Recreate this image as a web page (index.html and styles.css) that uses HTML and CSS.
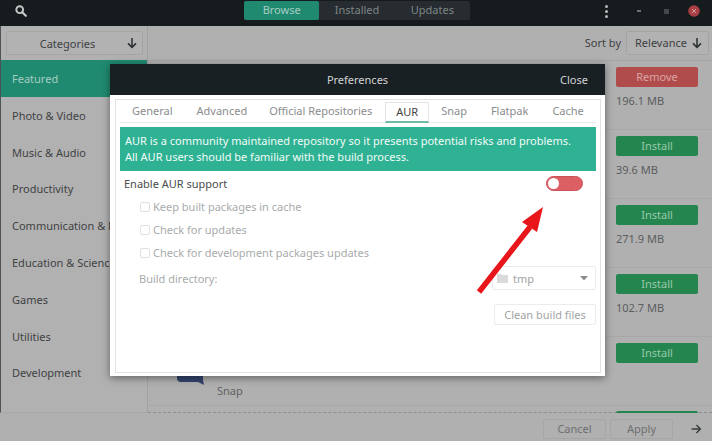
FILE: index.html
```html
<!DOCTYPE html>
<html lang="en">
<head>
<meta charset="utf-8">
<title>Preferences</title>
<link rel="stylesheet" href="styles.css">
</head>
<body>
<div class="app">
  <header class="topbar">
    <svg class="search-icon" width="12" height="12" viewBox="0 0 12 12"><circle cx="4.7" cy="4.7" r="3.4" fill="none" stroke="#c4c8c8" stroke-width="1.9"/><path d="M7.2 7.2L10.8 10.8" stroke="#c4c8c8" stroke-width="2.2" stroke-linecap="round"/></svg>
    <nav class="tabs-main">
      <span class="tab-main active">Browse</span>
      <span class="tab-main">Installed</span>
      <span class="tab-main">Updates</span>
    </nav>
    <div class="win-controls">
      <span class="kebab"><i></i><i></i><i></i></span>
      <span class="win-min"></span>
      <span class="win-max"></span>
      <svg class="win-close" width="12" height="12" viewBox="0 0 12 12"><circle cx="6" cy="6" r="5.8" fill="#a83f44"/><path d="M4 4L8 8M8 4L4 8" stroke="#d79a9c" stroke-width="1"/></svg>
    </div>
  </header>
  <div class="content">
    <aside class="sidebar">
      <div class="cat-wrap">
        <div class="select cat-select"><span class="cat-label">Categories</span>
          <svg class="arrow-down" width="12" height="12" viewBox="0 0 12 12"><path d="M6 1V10M2 6.4L6 10.4L10 6.4" fill="none" stroke="#2b2f31" stroke-width="1.5"/></svg>
        </div>
      </div>
      <ul class="cats">
        <li class="cat active">Featured</li>
        <li class="cat">Photo &amp; Video</li>
        <li class="cat">Music &amp; Audio</li>
        <li class="cat">Productivity</li>
        <li class="cat">Communication &amp; News</li>
        <li class="cat">Education &amp; Science</li>
        <li class="cat">Games</li>
        <li class="cat">Utilities</li>
        <li class="cat">Development</li>
      </ul>
    </aside>
    <main class="list">
      <div class="sortbar">
        <span class="sort-label">Sort by</span>
        <div class="select sort-select">Relevance
          <svg class="arrow-down" width="12" height="12" viewBox="0 0 12 12"><path d="M6 1V10M2 6.4L6 10.4L10 6.4" fill="none" stroke="#2b2f31" stroke-width="1.5"/></svg>
        </div>
      </div>
      <div class="rows">
        <div class="row"><div class="pkg-action"><span class="btn-remove">Remove</span><span class="size">196.1 MB</span></div></div>
        <div class="row"><div class="pkg-action"><span class="btn-install">Install</span><span class="size">39.6 MB</span></div></div>
        <div class="row"><div class="pkg-action"><span class="btn-install">Install</span><span class="size">271.9 MB</span></div></div>
        <div class="row"><div class="pkg-action"><span class="btn-install">Install</span><span class="size">102.7 MB</span></div></div>
        <div class="row row-snap">
          <div class="pkg-info">
            <svg class="snap-icon" width="28" height="22" viewBox="0 0 28 22"><path d="M1 0H27V17L28 22L22 19H5Q1 19 1 15Z" fill="#33456f"/></svg>
            <span class="pkg-source">Snap</span>
          </div>
          <div class="pkg-action"><span class="btn-install">Install</span></div>
        </div>
        <div class="row-peek"><span class="btn-peek"></span></div>
      </div>
    </main>
  </div>
  <footer class="footer">
    <span class="foot-btn">Cancel</span>
    <span class="foot-btn">Apply</span>
    <svg class="arrow-right" width="12" height="12" viewBox="0 0 12 12"><path d="M1.5 6H10M6.4 2L10.4 6L6.4 10" fill="none" stroke="#3a3e40" stroke-width="1.4"/></svg>
  </footer>
</div>

<section class="dialog">
  <div class="dialog-head">
    <span class="dialog-title">Preferences</span>
    <span class="dialog-close">Close</span>
  </div>
  <div class="dialog-body">
    <div class="pane">
      <div class="pref-tabs">
        <span class="pref-tab">General</span>
        <span class="pref-tab">Advanced</span>
        <span class="pref-tab official">Official Repositories</span>
        <span class="pref-tab current">AUR</span>
        <span class="pref-tab">Snap</span>
        <span class="pref-tab">Flatpak</span>
        <span class="pref-tab">Cache</span>
      </div>
      <div class="notice">AUR is a community maintained repository so it presents potential risks and problems.<br>All AUR users should be familiar with the build process.</div>
      <div class="enable-row">
        <span>Enable AUR support</span>
        <span class="switch"><span class="knob"></span></span>
      </div>
      <label class="check"><span class="box"></span>Keep built packages in cache</label>
      <label class="check"><span class="box"></span>Check for updates</label>
      <label class="check"><span class="box"></span>Check for development packages updates</label>
      <div class="dir-row">
        <span>Build directory:</span>
        <span class="dir-select">
          <svg class="folder" width="11" height="9" viewBox="0 0 11 9"><path d="M0 0H4L5 1H11V9H0Z" fill="#dadada"/></svg>
          <span class="dir-name">tmp</span>
          <svg class="caret" width="8" height="5" viewBox="0 0 8 5"><path d="M0 0H8L4 4.5Z" fill="#8b8b8b"/></svg>
        </span>
      </div>
      <div class="clean-row"><span class="clean-btn">Clean build files</span></div>
    </div>
  </div>
</section>

<svg class="annotation" width="80" height="96" viewBox="0 0 80 96">
  <path d="M3 88L54 23" stroke="#e8161b" stroke-width="5.5" fill="none"/>
  <path d="M67 3L61 28L46 18Z" fill="#e8161b"/>
</svg>
</body>
</html>
```
FILE: styles.css
```css
* { box-sizing: border-box; }
html, body { margin: 0; padding: 0; }
body {
  width: 712px;
  height: 441px;
  overflow: hidden;
  position: relative;
  font-family: "Noto Sans", sans-serif;
  font-size: 11px;
  color: #4a4c4d;
  background: #b0b0b0;
}
.app { display: flex; flex-direction: column; height: 441px; }

.topbar {
  height: 26px;
  flex: none;
  background: #161b1e;
  display: flex;
  align-items: flex-start;
  position: relative;
  padding: 5px 0 0 15px;
}
.tabs-main {
  position: absolute;
  left: 244px;
  top: 1px;
  height: 19px;
  width: 226px;
  display: flex;
  background: #262c30;
  border-radius: 2px;
}
.tab-main {
  width: 76px;
  text-align: center;
  line-height: 18px;
  color: #7e8486;
}
.tab-main.active { background: #208a70; color: #a6cdc3; border-radius: 2px; }
.win-controls {
  margin-left: auto;
  display: flex;
  align-items: center;
  height: 12px;
  margin-right: 12px;
}
.kebab { display: flex; flex-direction: column; gap: 2px; margin-right: 29px; }
.kebab i { width: 3px; height: 3px; border-radius: 50%; background: #b7baba; display: block; }
.win-min { width: 4px; height: 2px; background: #6c7072; margin-right: 23px; }
.win-max { width: 5px; height: 5px; background: #43484a; margin-right: 19px; }
.win-close { display: block; }

.content { flex: 1; display: flex; min-height: 0; }
.sidebar {
  width: 148px;
  flex: none;
  border-right: 1px solid #a2a2a2;
  border-left: 1px solid #4e5355;
  border-bottom: 1px solid #a8a8a8;
  background: #b1b1b1;
}
.cat-wrap { height: 34px; padding: 5px 4px 0 5px; }
.select {
  border: 1px solid #a4a4a4;
  border-radius: 2px;
  background: #b2b2b2;
  display: flex;
  align-items: center;
  color: #3e4142;
  height: 24px;
}
.cat-select { position: relative; justify-content: center; padding-right: 14px; }
.cat-select .arrow-down { position: absolute; right: 4px; top: 5px; }
.cats { list-style: none; margin: 0; padding: 0; }
.cat {
  height: 36.8px;
  line-height: 37px;
  padding-left: 11px;
  white-space: nowrap;
  overflow: hidden;
  color: #3f4243;
}
.cat.active { background: #208a70; color: #a6cdc3; }

.list { flex: 1; min-width: 0; display: flex; flex-direction: column; }
.sortbar {
  height: 35px;
  flex: none;
  display: flex;
  align-items: center;
  justify-content: flex-end;
  border-bottom: 1px solid #a4a4a4;
  padding: 0 3px 1px 0;
  gap: 5px;
}
.sort-label { color: #3f4243; }
.sort-select { width: 83px; padding-left: 8px; justify-content: space-between; padding-right: 5px; }

.rows { flex: 1; min-height: 0; border-bottom: 1px dashed #8e8e8e; }
.row {
  height: 69px;
  border-bottom: 1px solid #a8a8a8;
  display: flex;
  justify-content: flex-end;
  padding: 6px 14px 0 0;
}
.pkg-action { width: 82px; display: flex; flex-direction: column; }
.btn-remove, .btn-install {
  height: 20px;
  line-height: 20px;
  text-align: center;
  border-radius: 2px;
}
.btn-remove { background: #b14c4c; color: #d9a4a4; }
.btn-install { background: #24864e; color: #99c8ab; }
.size { margin-top: 4px; line-height: 20px; color: #5b5d5e; }
.row-snap { justify-content: space-between; }
.pkg-info { display: flex; flex-direction: column; margin-left: 28px; }
.snap-icon { margin-top: 20px; flex: none; }
.pkg-source { margin: -2px 0 0 41px; line-height: 15px; color: #606263; }
.row-peek { height: 6px; display: flex; justify-content: flex-end; padding: 5px 14px 0 0; }
.btn-peek { width: 82px; height: 2px; flex: none; background: #24864e; border-radius: 2px 2px 0 0; }

.footer {
  height: 28px;
  flex: none;
  display: flex;
  align-items: center;
  justify-content: flex-end;
  gap: 4px;
  padding: 3px 10px 0 0;
  color: #6d6f70;
}
.foot-btn {
  width: 63px;
  height: 20px;
  line-height: 18px;
  text-align: center;
  border: 1px solid #a6a6a6;
  border-radius: 2px;
}
.arrow-right { margin-left: 13px; }

.dialog {
  position: absolute;
  left: 110px;
  top: 64px;
  width: 495px;
  height: 312px;
  background: #fff;
  box-shadow: 0 2px 8px rgba(0, 0, 0, 0.45);
  display: flex;
  flex-direction: column;
}
.dialog-head {
  height: 31px;
  flex: none;
  background: #192024;
  color: #d2d4d4;
  position: relative;
  text-align: center;
  line-height: 31px;
}
.dialog-close { position: absolute; right: 17px; top: 0; }
.dialog-body { flex: 1; min-height: 0; padding: 4px 4px 3px 5px; background: #fff; }
.pane { height: 100%; border: 1px solid #e2e2e2; padding: 0 4px; }
.pref-tabs {
  display: flex;
  height: 23px;
  margin-bottom: 4px;
  color: #8a8c8d;
  border-bottom: 1px solid #ececec;
}
.pref-tab { padding: 0 12px; line-height: 21px; white-space: nowrap; }
.pref-tab.official { margin-left: -2px; }
.pref-tab.current {
  padding: 0 10px;
  margin: 2px 0 -1px 1px;
  height: 21px;
  line-height: 18px;
  color: #444;
  border: 1px solid #e4e4e4;
  border-bottom: 2px solid #6fbba8;
}
.notice {
  background: #2fb293;
  color: #f2fbf8;
  height: 44px;
  padding: 6px 0 0 5px;
  line-height: 16px;
  margin-bottom: 3px;
}
.enable-row {
  display: flex;
  justify-content: space-between;
  align-items: center;
  height: 18px;
  padding: 0 13px 0 4px;
  color: #4a4c4d;
}
.switch {
  width: 37px;
  height: 15px;
  border-radius: 8px;
  background: #dc5f63;
  border: 1px solid #c95358;
  position: relative;
  display: block;
}
.knob {
  position: absolute;
  left: 1px;
  top: 1px;
  width: 11px;
  height: 11px;
  border-radius: 50%;
  background: #fff;
}
.check {
  display: flex;
  align-items: center;
  gap: 3px;
  height: 23px;
  margin-left: 20px;
  color: #a9abab;
}
.box {
  width: 10px;
  height: 10px;
  border: 1px solid #e0e0e0;
  border-radius: 2px;
  display: block;
}
.check:first-of-type { margin-top: 3px; }
.dir-row {
  display: flex;
  justify-content: space-between;
  align-items: center;
  height: 26px;
  margin-top: 1px;
  padding-left: 19px;
  color: #a9abab;
}
.dir-select {
  width: 104px;
  height: 24px;
  border: 1px solid #ececec;
  border-radius: 2px;
  display: flex;
  align-items: center;
  padding: 0 7px 0 3px;
}
.folder { margin-left: 1px; }
.dir-name { margin-left: 5px; color: #a2a4a4; }
.caret { margin-left: auto; }
.clean-row { display: flex; justify-content: flex-end; margin-top: 13px; }
.clean-btn {
  width: 102px;
  height: 21px;
  line-height: 19px;
  text-align: center;
  border: 1px solid #ececec;
  border-radius: 2px;
  color: #a2a4a4;
}
.annotation { position: absolute; left: 476px; top: 204px; }
```
